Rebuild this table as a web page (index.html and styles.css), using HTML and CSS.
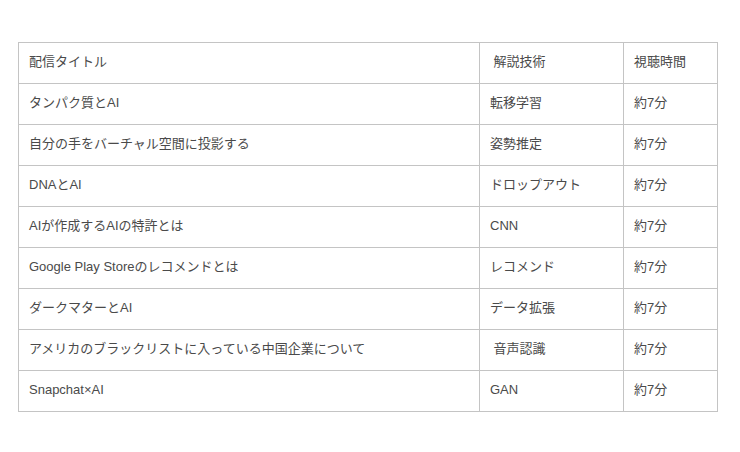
FILE: index.html
```html
<!DOCTYPE html>
<html lang="ja">
<head>
<meta charset="utf-8">
<link rel="stylesheet" href="styles.css">
</head>
<body>
<div class="page">
<table class="list">
<colgroup><col class="c1"><col class="c2"><col class="c3"></colgroup>
<tr><td>配信タイトル</td><td>&nbsp;解説技術</td><td>視聴時間</td></tr>
<tr><td>タンパク質とAI</td><td>転移学習</td><td>約7分</td></tr>
<tr><td>自分の手をバーチャル空間に投影する</td><td>姿勢推定</td><td>約7分</td></tr>
<tr><td>DNAとAI</td><td>ドロップアウト</td><td>約7分</td></tr>
<tr><td>AIが作成するAIの特許とは</td><td>CNN</td><td>約7分</td></tr>
<tr><td>Google Play Storeのレコメンドとは</td><td>レコメンド</td><td>約7分</td></tr>
<tr><td>ダークマターとAI</td><td>データ拡張</td><td>約7分</td></tr>
<tr><td>アメリカのブラックリストに入っている中国企業について</td><td>&nbsp;音声認識</td><td>約7分</td></tr>
<tr><td>Snapchat×AI</td><td>GAN</td><td>約7分</td></tr>
</table>
</div>
</body>
</html>
```

FILE: styles.css
```css
html, body {
  margin: 0;
  padding: 0;
  background: #fff;
}
.page {
  padding: 42px 0 0 18px;
}
.list {
  border-collapse: collapse;
  table-layout: fixed;
  width: 699px;
  font-family: "Liberation Sans", "Noto Sans CJK JP", sans-serif;
  font-size: 13px;
  line-height: 16px;
  color: #4a4a4a;
}
.c1 { width: 461px; }
.c2 { width: 144px; }
.c3 { width: 94px; }
.list td {
  border: 1px solid #c4c4c4;
  padding: 0 10px 3px;
  box-sizing: border-box;
  height: 41px;
  vertical-align: middle;
  white-space: nowrap;
}
```
